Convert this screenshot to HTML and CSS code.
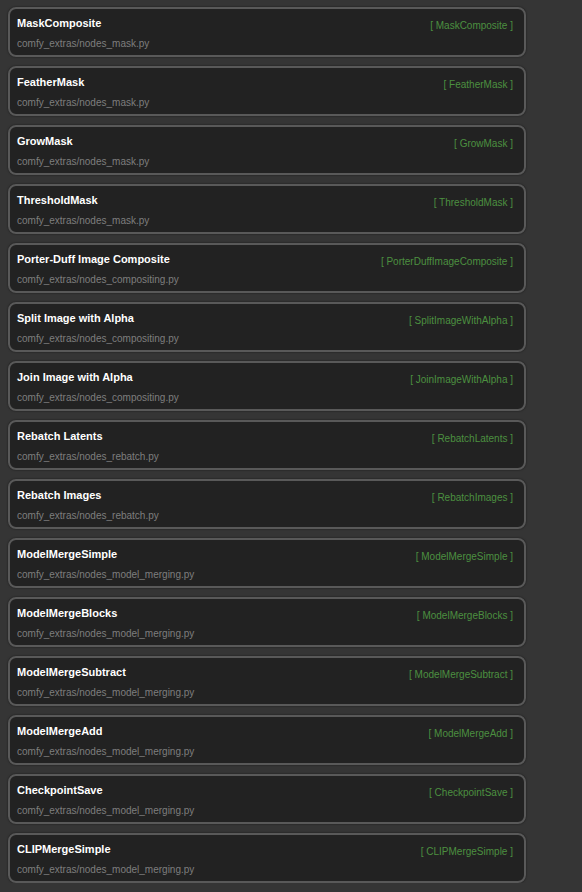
FILE: index.html
```html
<!DOCTYPE html>
<html>
<head>
<meta charset="utf-8">
<link rel="stylesheet" href="styles.css">
</head>
<body>
<div class="list">
  <div class="card"><div class="info"><div class="title">MaskComposite</div><div class="path">comfy_extras/nodes_mask.py</div></div><div class="tag">[ MaskComposite ]</div></div>
  <div class="card"><div class="info"><div class="title">FeatherMask</div><div class="path">comfy_extras/nodes_mask.py</div></div><div class="tag">[ FeatherMask ]</div></div>
  <div class="card"><div class="info"><div class="title">GrowMask</div><div class="path">comfy_extras/nodes_mask.py</div></div><div class="tag">[ GrowMask ]</div></div>
  <div class="card"><div class="info"><div class="title">ThresholdMask</div><div class="path">comfy_extras/nodes_mask.py</div></div><div class="tag">[ ThresholdMask ]</div></div>
  <div class="card"><div class="info"><div class="title">Porter-Duff Image Composite</div><div class="path">comfy_extras/nodes_compositing.py</div></div><div class="tag">[ PorterDuffImageComposite ]</div></div>
  <div class="card"><div class="info"><div class="title">Split Image with Alpha</div><div class="path">comfy_extras/nodes_compositing.py</div></div><div class="tag">[ SplitImageWithAlpha ]</div></div>
  <div class="card"><div class="info"><div class="title">Join Image with Alpha</div><div class="path">comfy_extras/nodes_compositing.py</div></div><div class="tag">[ JoinImageWithAlpha ]</div></div>
  <div class="card"><div class="info"><div class="title">Rebatch Latents</div><div class="path">comfy_extras/nodes_rebatch.py</div></div><div class="tag">[ RebatchLatents ]</div></div>
  <div class="card"><div class="info"><div class="title">Rebatch Images</div><div class="path">comfy_extras/nodes_rebatch.py</div></div><div class="tag">[ RebatchImages ]</div></div>
  <div class="card"><div class="info"><div class="title">ModelMergeSimple</div><div class="path">comfy_extras/nodes_model_merging.py</div></div><div class="tag">[ ModelMergeSimple ]</div></div>
  <div class="card"><div class="info"><div class="title">ModelMergeBlocks</div><div class="path">comfy_extras/nodes_model_merging.py</div></div><div class="tag">[ ModelMergeBlocks ]</div></div>
  <div class="card"><div class="info"><div class="title">ModelMergeSubtract</div><div class="path">comfy_extras/nodes_model_merging.py</div></div><div class="tag">[ ModelMergeSubtract ]</div></div>
  <div class="card"><div class="info"><div class="title">ModelMergeAdd</div><div class="path">comfy_extras/nodes_model_merging.py</div></div><div class="tag">[ ModelMergeAdd ]</div></div>
  <div class="card"><div class="info"><div class="title">CheckpointSave</div><div class="path">comfy_extras/nodes_model_merging.py</div></div><div class="tag">[ CheckpointSave ]</div></div>
  <div class="card"><div class="info"><div class="title">CLIPMergeSimple</div><div class="path">comfy_extras/nodes_model_merging.py</div></div><div class="tag">[ CLIPMergeSimple ]</div></div>
</div>
</body>
</html>
```
FILE: styles.css
```css
html, body {
  margin: 0;
  padding: 0;
  background: #353535;
  font-family: "Liberation Sans", Arial, sans-serif;
}
.list {
  display: flex;
  flex-direction: column;
  gap: 9px;
  padding: 7px 0 0 8px;
  width: 518px;
}
.card {
  display: flex;
  justify-content: space-between;
  align-items: flex-start;
  height: 50px;
  box-sizing: border-box;
  background: #222222;
  border: 2px solid #595959;
  border-radius: 8px;
  padding: 8px 11px 0 7px;
  box-shadow: 0 0 2px rgba(0,0,0,0.6);
}
.info {
  display: flex;
  flex-direction: column;
  gap: 8px;
}
.title {
  font-size: 11px;
  line-height: 13px;
  font-weight: bold;
  color: #ffffff;
}
.path {
  font-size: 10px;
  line-height: 12px;
  color: #7e7e7e;
}
.tag {
  font-size: 10px;
  line-height: 12px;
  color: #4c9040;
  padding-top: 3px;
}
```
